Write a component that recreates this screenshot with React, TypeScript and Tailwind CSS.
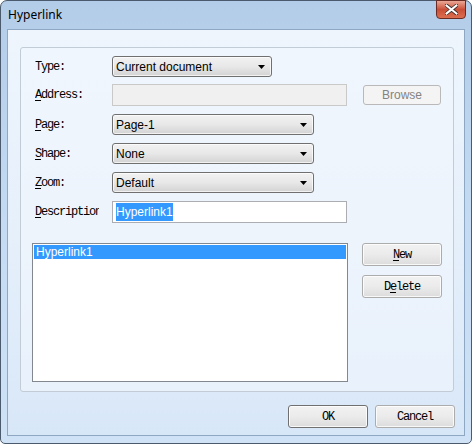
import type { ReactNode } from 'react';

const mono = "font-['Liberation_Mono','DejaVu_Sans_Mono',monospace] text-[12px] tracking-[-1.2px] text-black";
const sansBase = "font-['Liberation_Sans',Arial,sans-serif] text-[12px]";
const sans = `${sansBase} text-black`;

function Label({ children }: { children: ReactNode }) {
  return <div className={`${mono} w-[64px] overflow-hidden whitespace-nowrap leading-[14px]`}>{children}</div>;
}

function Mn({ children }: { children: ReactNode }) {
  return <span className="underline underline-offset-2">{children}</span>;
}

function Arrow() {
  return (
    <svg width="7" height="4" viewBox="0 0 7 4" className="shrink-0">
      <path d="M0 0h7L3.5 4z" fill="#000" />
    </svg>
  );
}

function Select({ value, width }: { value: string; width: string }) {
  return (
    <div
      className={`${width} h-[21px] flex items-center justify-between pl-[3px] pr-[6px] rounded-[3px] border border-[#707070] bg-gradient-to-b from-[#f2f2f2] via-[#e8e8e8] to-[#d3d3d3] shadow-[inset_0_0_0_1px_rgba(255,255,255,0.7)]`}
    >
      <span className={sans}>{value}</span>
      <Arrow />
    </div>
  );
}

function Button({ children, dark }: { children: ReactNode; dark?: boolean }) {
  return (
    <div
      className={`w-[80px] h-[23px] flex items-center justify-center rounded-[3px] border ${dark ? 'border-[#707070]' : 'border-[#acacac]'} bg-gradient-to-b from-[#f2f2f2] via-[#ebebeb] to-[#dcdcdc] shadow-[inset_0_0_0_1px_rgba(255,255,255,0.8)]`}
    >
      <span className={mono}>{children}</span>
    </div>
  );
}

export default function App() {
  return (
    <div className="w-[472px] h-[444px] overflow-hidden bg-white">
      <div className="w-[472px] h-[444px] rounded-t-[7px] rounded-b-[5px] border border-[#4b5a6c] bg-gradient-to-b from-[#b3cce8] via-[#c4dbf3] to-[#cfe2f6] flex flex-col">
        {/* title bar */}
        <div className="h-[28px] flex items-start justify-between pl-[7px] pr-[5px]">
          <div className="pt-[5px] font-['Noto_Sans','Open_Sans',sans-serif] text-[12px] leading-[18px] text-black">Hyperlink</div>
          <div className="w-[30px] h-[19px] -mt-px rounded-b-[4px] border border-[#6b2a22] bg-gradient-to-b from-[#e9a896] via-[#c94e37] to-[#dc6e50] flex items-center justify-center">
            <svg width="13" height="11" viewBox="0 0 13 11">
              <path d="M1.5 1.5l10 8M11.5 1.5l-10 8" stroke="#3a2a2a" strokeWidth="3.6" strokeLinecap="square" />
              <path d="M1.5 1.5l10 8M11.5 1.5l-10 8" stroke="#ffffff" strokeWidth="2" strokeLinecap="square" />
            </svg>
          </div>
        </div>

        {/* client area */}
        <div className="mx-[6px] h-[407px] border border-[#8ea7c2] bg-gradient-to-b from-[#eef5fd] via-[#e6f0fb] to-[#d8e7f8] flex flex-col">
          {/* group box */}
          <div className="ml-[12px] mt-[17px] w-[434px] h-[345px] border border-[#c2ccd6] rounded-[3px] bg-[#f1f7fd]/60 flex flex-col pl-[14px]">
            <div className="mt-[8px] flex items-center">
              <Label>Type:</Label>
              <div className="ml-[13px]"><Select value="Current document" width="w-[160px]" /></div>
            </div>

            <div className="mt-[7px] flex items-center">
              <Label><Mn>A</Mn>ddress:</Label>
              <div className="ml-[13px] w-[235px] h-[22px] border border-[#c9c9c9] bg-[#f0f0f0]" />
              <div className="ml-[16px] w-[78px] h-[20px] flex items-center justify-center rounded-[3px] border border-[#b9b9b9] bg-[#f4f4f4]">
                <span className={`${sansBase} text-[#838383]`}>Browse</span>
              </div>
            </div>

            <div className="mt-[8px] flex items-center">
              <Label><Mn>P</Mn>age:</Label>
              <div className="ml-[13px]"><Select value="Page-1" width="w-[202px]" /></div>
            </div>

            <div className="mt-[8px] flex items-center">
              <Label><Mn>S</Mn>hape:</Label>
              <div className="ml-[13px]"><Select value="None" width="w-[202px]" /></div>
            </div>

            <div className="mt-[8px] flex items-center">
              <Label><Mn>Z</Mn>oom:</Label>
              <div className="ml-[13px]"><Select value="Default" width="w-[202px]" /></div>
            </div>

            <div className="mt-[8px] flex items-center">
              <Label><Mn>D</Mn>escription</Label>
              <div className="ml-[13px] w-[235px] h-[22px] border border-[#abadb3] bg-white flex items-center pl-[3px]">
                <span className={`${sansBase} bg-[#3399ff] text-white leading-[18px]`}>Hyperlink1</span>
              </div>
            </div>

            <div className="mt-[20px] -ml-[3px] flex items-start">
              <div className="w-[316px] h-[139px] border border-[#828790] bg-white p-px">
                <div className={`${sansBase} h-[14px] leading-[14px] bg-[#3399ff] text-white pl-[2px]`}>Hyperlink1</div>
              </div>
              <div className="ml-[14px] flex flex-col gap-[9px]">
                <Button><Mn>N</Mn>ew</Button>
                <Button>D<Mn>e</Mn>lete</Button>
              </div>
            </div>
          </div>

          {/* footer buttons */}
          <div className="mt-[13px] flex justify-end gap-[7px] pr-[9px]">
            <Button dark>OK</Button>
            <Button>Cancel</Button>
          </div>
        </div>
      </div>
    </div>
  );
}
